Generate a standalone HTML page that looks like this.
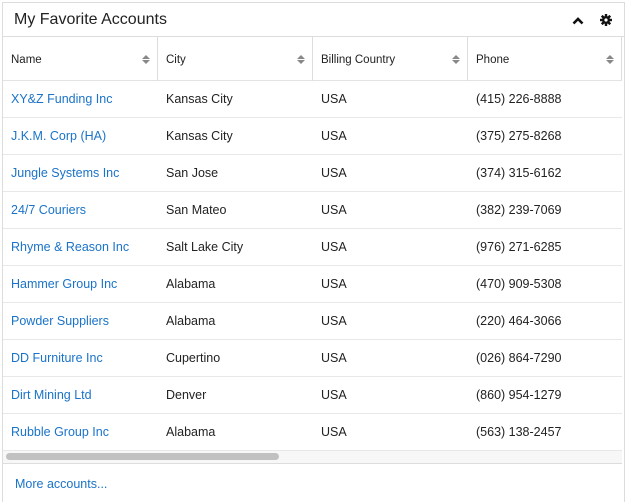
<!DOCTYPE html>
<html><head><style>
*{margin:0;padding:0;box-sizing:border-box}
body{width:628px;height:497px;background:#fff;font-family:"Liberation Sans",sans-serif;position:relative;overflow:hidden}
.panel{position:absolute;left:2px;top:2px;width:623px;height:500px;border:1px solid #dcdcdc;border-bottom:none}
.title{position:absolute;left:11px;top:8px;font-size:16px;color:#222}
.hdrline{position:absolute;left:0;right:0;top:33px;border-top:1px solid #ddd}
.row{position:absolute;left:0;width:619px;height:37px;border-bottom:1px solid #e8e8e8;font-size:12.5px;color:#222}
.row span{position:absolute;top:11px}
.a{color:#1a73c8}
.th{height:44px;font-size:11.5px;border-bottom:1px solid #e3e3e3}
.th span{top:17px}
.vd{position:absolute;top:34px;height:44px;border-left:1px solid #ddd}
.sort{position:absolute;top:18px;width:0;height:0}
.sort:before{content:"";position:absolute;left:-4px;top:0;border:4px solid transparent;border-bottom:4px solid #888;border-top:0}
.sort:after{content:"";position:absolute;left:-4px;top:5px;border:4px solid transparent;border-top:4px solid #888;border-bottom:0}
</style></head><body>
<div class="panel">
<div class="title">My Favorite Accounts</div>
<svg style="position:absolute;left:569px;top:13px" width="12" height="9" viewBox="0 0 12 9"><path d="M1.5 7.5L6 3l4.5 4.5" stroke="#111" stroke-width="2.6" fill="none"/></svg>
<svg style="position:absolute;left:597px;top:11px" width="12" height="12" viewBox="0 0 12 12"><g fill="#111"><circle cx="6" cy="6" r="4"/><rect x="4.8" y="0" width="2.4" height="12"/><rect x="0" y="4.8" width="12" height="2.4"/><rect x="4.8" y="0" width="2.4" height="12" transform="rotate(45 6 6)"/><rect x="4.8" y="0" width="2.4" height="12" transform="rotate(-45 6 6)"/></g><circle cx="6" cy="6" r="1.6" fill="#fff"/></svg>
<div class="hdrline"></div>
<div class="row th" style="top:34px">
<span style="left:8px">Name</span><i class="sort" style="left:143px"></i>
<span style="left:163px">City</span><i class="sort" style="left:298px"></i>
<span style="left:318px">Billing Country</span><i class="sort" style="left:453px"></i>
<span style="left:473px">Phone</span><i class="sort" style="left:607px"></i>
</div>
<div class="vd" style="left:154px"></div><div class="vd" style="left:309px"></div><div class="vd" style="left:464px"></div><div class="vd" style="left:618px"></div>
<div class="row" style="top:78px"><span class="a" style="left:8px">XY&amp;Z Funding Inc</span><span style="left:163px">Kansas City</span><span style="left:318px">USA</span><span style="left:473px">(415) 226-8888</span></div>
<div class="row" style="top:115px"><span class="a" style="left:8px">J.K.M. Corp (HA)</span><span style="left:163px">Kansas City</span><span style="left:318px">USA</span><span style="left:473px">(375) 275-8268</span></div>
<div class="row" style="top:152px"><span class="a" style="left:8px">Jungle Systems Inc</span><span style="left:163px">San Jose</span><span style="left:318px">USA</span><span style="left:473px">(374) 315-6162</span></div>
<div class="row" style="top:189px"><span class="a" style="left:8px">24/7 Couriers</span><span style="left:163px">San Mateo</span><span style="left:318px">USA</span><span style="left:473px">(382) 239-7069</span></div>
<div class="row" style="top:226px"><span class="a" style="left:8px">Rhyme &amp; Reason Inc</span><span style="left:163px">Salt Lake City</span><span style="left:318px">USA</span><span style="left:473px">(976) 271-6285</span></div>
<div class="row" style="top:263px"><span class="a" style="left:8px">Hammer Group Inc</span><span style="left:163px">Alabama</span><span style="left:318px">USA</span><span style="left:473px">(470) 909-5308</span></div>
<div class="row" style="top:300px"><span class="a" style="left:8px">Powder Suppliers</span><span style="left:163px">Alabama</span><span style="left:318px">USA</span><span style="left:473px">(220) 464-3066</span></div>
<div class="row" style="top:337px"><span class="a" style="left:8px">DD Furniture Inc</span><span style="left:163px">Cupertino</span><span style="left:318px">USA</span><span style="left:473px">(026) 864-7290</span></div>
<div class="row" style="top:374px"><span class="a" style="left:8px">Dirt Mining Ltd</span><span style="left:163px">Denver</span><span style="left:318px">USA</span><span style="left:473px">(860) 954-1279</span></div>
<div class="row" style="top:411px"><span class="a" style="left:8px">Rubble Group Inc</span><span style="left:163px">Alabama</span><span style="left:318px">USA</span><span style="left:473px">(563) 138-2457</span></div>
<div style="position:absolute;left:0;width:619px;top:448px;height:13px;background:#f7f7f7;border-bottom:1px solid #ddd"></div>
<div style="position:absolute;left:3px;top:450px;width:273px;height:7px;border-radius:4px;background:#c1c1c1"></div>
<div style="position:absolute;left:12px;top:474px;font-size:12.5px;color:#1a73c8">More accounts...</div>
</div>
</body></html>
